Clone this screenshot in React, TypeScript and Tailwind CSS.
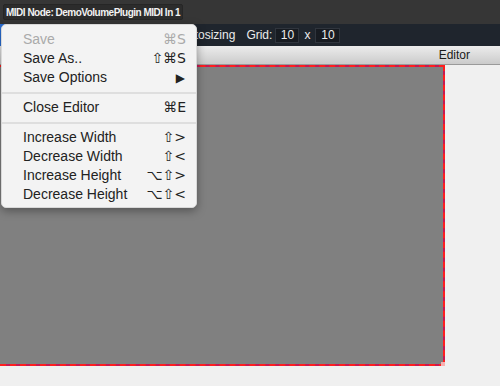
import React from "react";

const font = { fontFamily: '"Liberation Sans", Arial, sans-serif' };
const sym = { fontFamily: '"DejaVu Sans", "Liberation Sans", sans-serif' };

type Item = { label: string; sc?: string; disabled?: boolean; arrow?: boolean } | "sep";

const items: Item[] = [
  { label: "Save", sc: "⌘S", disabled: true },
  { label: "Save As..", sc: "⇧⌘S" },
  { label: "Save Options", arrow: true },
  "sep",
  { label: "Close Editor", sc: "⌘E" },
  "sep",
  { label: "Increase Width", sc: "⇧>" },
  { label: "Decrease Width", sc: "⇧<" },
  { label: "Increase Height", sc: "⌥⇧>" },
  { label: "Decrease Height", sc: "⌥⇧<" },
];

export default function App() {
  return (
    <div className="relative w-[500px] h-[386px] overflow-hidden bg-[#f0f0f0] flex flex-col" style={font}>
      {/* title bar */}
      <div className="h-[24px] bg-[#363636] flex items-center pl-[3px]">
        <div className="h-[16px] px-[2px] flex items-center rounded-[2px] bg-[#2c2c2c] border border-[#262626] text-[10px] tracking-[-0.5px] font-bold text-[#f2f2f2] whitespace-nowrap">
          MIDI Node: DemoVolumePlugin MIDI In 1
        </div>
      </div>
      {/* toolbar */}
      <div className="h-[22px] bg-[#1f252d] flex items-center text-[12px] text-[#ececec] whitespace-nowrap">
        <div className="w-[40px] h-full bg-[#2a6fd6]" />
        <div className="ml-[140px]">Autosizing</div>
        <div className="ml-[11px]">Grid:</div>
        <div className="ml-[3px] w-[24px] h-[15px] border border-[#30353d] bg-[#171b21] flex items-center justify-center">10</div>
        <div className="mx-[5px]">x</div>
        <div className="w-[25px] h-[15px] border border-[#30353d] bg-[#171b21] flex items-center justify-center">10</div>
      </div>
      {/* tab bar */}
      <div className="h-[19px] bg-gradient-to-b from-[#ececec] to-[#cbcbcb] border-b border-[#9a9a9a] flex items-center justify-end pr-[30px] text-[12px] text-[#1a1a1a]">
        Editor
      </div>
      {/* content */}
      <div className="flex-1 flex items-start">
        <div className="relative w-[445px] h-[301px] bg-[#c41a55]">
          <div className="w-full h-full border-t-2 border-r-2 border-b-2 border-dashed border-[#ff1e1e] bg-[#808080] bg-clip-padding" />
          <div className="absolute right-0 bottom-0 w-[4px] h-[4px] bg-[#f6b0b0]" />
        </div>
      </div>

      {/* menu */}
      <div className="absolute left-[1px] top-[24px] w-[196px] rounded-[5px] bg-[#f3f3f3] shadow-[0_3px_10px_rgba(0,0,0,0.35)] border border-[#d8d8d8] pt-[5px] pb-[3px] text-[14px] text-[#222]">
        {items.map((it, i) =>
          it === "sep" ? (
            <div key={i} className="h-[11px] flex items-center">
              <div className="w-full h-[2px] bg-[#dedede]" />
            </div>
          ) : (
            <div key={i} className={`h-[19px] flex items-center justify-between pl-[21px] pr-[10px] ${it.disabled ? "text-[#aaaaaa]" : ""}`}>
              <span>{it.label}</span>
              {it.arrow ? (
                <span className="text-[12px] pr-[1px]" style={sym}>▶</span>
              ) : (
                <span className="text-[14px]" style={sym}>{it.sc}</span>
              )}
            </div>
          )
        )}
      </div>
    </div>
  );
}
